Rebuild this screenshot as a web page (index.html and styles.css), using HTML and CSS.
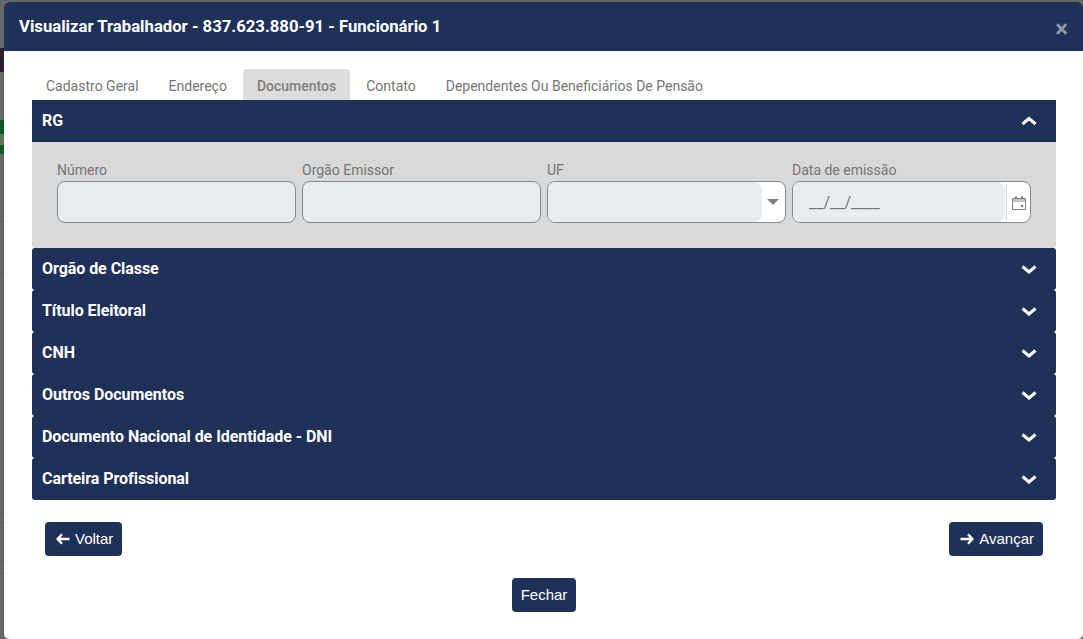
FILE: index.html
```html
<!DOCTYPE html>
<html lang="en">
<head>
    <meta charset="UTF-8">
    <meta name="viewport" content="width=device-width, initial-scale=1.0">
    <title>Visualizar Trabalhador</title>
    <link rel="stylesheet" href="styles.css">
</head>
<body>
    <!-- the bit of the page that shows behind the backdrop -->
    <div class="behind">
        <span class="behind-dark"></span>
        <span class="behind-green"></span>
        <span class="behind-arrow"></span>
        <span class="behind-green behind-green-small"></span>
        <span class="behind-line behind-line-1"></span>
        <span class="behind-line behind-line-2"></span>
        <span class="behind-line behind-line-3"></span>
        <span class="behind-line behind-line-4"></span>
        <span class="behind-line behind-line-5"></span>
        <span class="behind-line behind-line-6"></span>
    </div>

    <div class="modal">
        <div class="modal-header">
            <h1>Visualizar Trabalhador - 837.623.880-91 - Funcionário 1</h1>
            <span class="close">×</span>
        </div>

        <div class="modal-body">
            <ul class="tabs">
                <li>Cadastro Geral</li>
                <li>Endereço</li>
                <li class="active">Documentos</li>
                <li>Contato</li>
                <li>Dependentes Ou Beneficiários De Pensão</li>
            </ul>

            <div class="accordion">
                <div class="acc-head">
                    <span>RG</span>
                    <svg class="chevron" viewBox="0 0 16 10"><path d="M1.500 8 8 2.500 14.500 8" /></svg>
                </div>
                <div class="acc-panel">
                    <div class="field">
                        <label>Número</label>
                        <div class="input"></div>
                    </div>
                    <div class="field">
                        <label>Orgão Emissor</label>
                        <div class="input"></div>
                    </div>
                    <div class="field">
                        <label>UF</label>
                        <div class="input input-addon">
                            <div class="input-fill select-fill"></div>
                            <div class="addon select-addon"><span class="caret"></span></div>
                        </div>
                    </div>
                    <div class="field">
                        <label>Data de emissão</label>
                        <div class="input input-addon">
                            <div class="input-fill date-fill">__/__/____</div>
                            <div class="addon date-addon">
                                <svg class="calendar" viewBox="0 0 14 14">
                                    <path class="cal-band" d="M1 3h12v3H1z" />
                                    <path class="cal-mark" d="M3 .5h2V3H3zM9 .5h2V3H9z" />
                                    <path class="cal-box" d="M.5 2.500h13v11H.5z" />
                                    <path class="cal-mark" d="M9 9h2v2H9z" />
                                </svg>
                            </div>
                        </div>
                    </div>
                </div>
                <div class="acc-head">
                    <span>Orgão de Classe</span>
                    <svg class="chevron" viewBox="0 0 16 10"><path d="M1.500 2.500 8 8l6.500-5.500" /></svg>
                </div>
                <div class="acc-head">
                    <span>Título Eleitoral</span>
                    <svg class="chevron" viewBox="0 0 16 10"><path d="M1.500 2.500 8 8l6.500-5.500" /></svg>
                </div>
                <div class="acc-head">
                    <span>CNH</span>
                    <svg class="chevron" viewBox="0 0 16 10"><path d="M1.500 2.500 8 8l6.500-5.500" /></svg>
                </div>
                <div class="acc-head">
                    <span>Outros Documentos</span>
                    <svg class="chevron" viewBox="0 0 16 10"><path d="M1.500 2.500 8 8l6.500-5.500" /></svg>
                </div>
                <div class="acc-head">
                    <span>Documento Nacional de Identidade - DNI</span>
                    <svg class="chevron" viewBox="0 0 16 10"><path d="M1.500 2.500 8 8l6.500-5.500" /></svg>
                </div>
                <div class="acc-head">
                    <span>Carteira Profissional</span>
                    <svg class="chevron" viewBox="0 0 16 10"><path d="M1.500 2.500 8 8l6.500-5.500" /></svg>
                </div>
            </div>

            <div class="nav-buttons">
                <button>
                    <svg class="arrow" viewBox="0 0 14 12"><path d="M6 1.200 1.600 6 6 10.800M2 6h11.500" /></svg>
                    Voltar
                </button>
                <button>
                    <svg class="arrow" viewBox="0 0 14 12"><path d="M8 1.200 12.400 6 8 10.800M12 6H.5" /></svg>
                    Avançar
                </button>
            </div>

            <div class="close-row">
                <button>Fechar</button>
            </div>
        </div>
    </div>
</body>
</html>
```

FILE: styles.css
```css
* {
    box-sizing: border-box;
}

body {
    font-family: Roboto, Arial, sans-serif;
    background: #676767;
    display: flex;
    height: 100vh;
    margin: 0;
    overflow: hidden;
}

.behind {
    width: 4px;
    flex-shrink: 0;
    display: flex;
    flex-direction: column;
}
.behind span {
    display: block;
    flex-shrink: 0;
}
.behind-dark {
    height: 24px;
    margin-top: 48px;
    background: #2c2030;
}
.behind-green {
    height: 14px;
    margin-top: 48px;
    background: #0f5a22;
}
.behind-arrow {
    height: 11px;
    background: #5f7558;
}
.behind-green-small {
    height: 9px;
    margin-top: 0;
    background: #0f5a22;
}
.behind-line {
    height: 1px;
    background: #5a5a5a;
}
.behind-line-1 { margin-top: 67px; }
.behind-line-2 { margin-top: 51px; }
.behind-line-3 { margin-top: 239px; }
.behind-line-4 { margin-top: 8px; }
.behind-line-5 { margin-top: 38px; }
.behind-line-6 { margin-top: 11px; }

.modal {
    flex: 1;
    margin-top: 2px;
    background: #fff;
    border-radius: 5px;
    overflow: hidden;
}

.modal-header {
    height: 49px;
    background: #1f3158;
    display: flex;
    align-items: center;
    justify-content: space-between;
    padding: 0 15px;
}
.modal-header h1 {
    margin: 0;
    font-size: 16.7px;
    font-weight: 700;
    color: #fff;
}
.close {
    font-size: 24px;
    font-weight: 700;
    line-height: 1;
    margin-top: 4px;
    color: #8f98ab;
}

.modal-body {
    padding: 18px 27px 0 28px;
}

.tabs {
    display: flex;
    gap: 2px;
    list-style: none;
    margin: 0;
    padding: 0;
}
.tabs li {
    height: 31px;
    line-height: 34px;
    padding: 0 14px;
    font-size: 14px;
    color: #757575;
    border-radius: 4px 4px 0 0;
}
.tabs li.active {
    background: #dcdcdc;
    font-weight: 500;
    color: #808080;
}

.accordion {
    display: flex;
    flex-direction: column;
}
.acc-head {
    height: 42px;
    background: #1f3158;
    display: flex;
    align-items: center;
    justify-content: space-between;
    padding: 0 19px 2px 10px;
    font-size: 16px;
    font-weight: 700;
    letter-spacing: -0.05px;
    color: #fff;
    border-radius: 3px;
}
.acc-head:first-child {
    border-radius: 0;
}
.chevron {
    width: 16px;
    height: 10px;
    margin-top: 1px;
    fill: none;
    stroke: #fff;
    stroke-width: 3;
}

.acc-panel {
    display: grid;
    grid-template-columns: repeat(4, 1fr);
    gap: 6px;
    height: 106px;
    padding: 20px 25px 0;
    background: #d9d9d9;
    border-radius: 0 0 3px 3px;
}
.field label {
    display: block;
    height: 19px;
    line-height: 17px;
    font-size: 14px;
    color: #757575;
}
.input {
    height: 42px;
    background: #e9ecef;
    border: 1px solid #888;
    border-radius: 8px;
}
.input-addon {
    display: flex;
    background: #fff;
    overflow: hidden;
}
.input-fill {
    height: 100%;
    background: #e9ecef;
    border-radius: 0 8px 8px 0;
}
.select-fill {
    width: 214px;
}
.date-fill {
    width: 212px;
    padding: 0 0 0 16px;
    line-height: 42px;
    font-size: 16px;
    color: #757575;
}
.addon {
    flex: 1;
    display: flex;
    align-items: center;
    justify-content: center;
}
.date-addon::before {
    content: "";
    width: 1px;
    height: 36px;
    background: #d3d3d3;
    margin-right: 5px;
}
.select-addon {
    padding-right: 1px;
}
.caret {
    width: 0;
    height: 0;
    border-left: 6.500px solid transparent;
    border-right: 6.500px solid transparent;
    border-top: 6px solid #808080;
}
.calendar {
    width: 14px;
    height: 14px;
    margin-right: 4px;
    margin-top: 1px;
}
.cal-band {
    fill: #c4c4c4;
}
.cal-mark {
    fill: #707070;
}
.cal-box {
    fill: none;
    stroke: #808080;
    stroke-width: 1;
}

button {
    height: 34px;
    padding: 0 9px 2px;
    background: #1f3158;
    color: #fff;
    border: none;
    border-radius: 4px;
    font-family: "Liberation Sans", Arial, sans-serif;
    font-size: 15px;
    cursor: pointer;
}
.nav-buttons {
    display: flex;
    justify-content: space-between;
    margin-top: 22px;
    padding: 0 13px;
}
.nav-buttons button {
    display: flex;
    align-items: center;
    gap: 5px;
    padding: 0 9px 2px 11px;
}
.arrow {
    width: 14px;
    height: 12px;
    margin-top: 1px;
    fill: none;
    stroke: #fff;
    stroke-width: 2.400;
}
.close-row {
    display: flex;
    justify-content: center;
    margin-top: 22px;
}
```
